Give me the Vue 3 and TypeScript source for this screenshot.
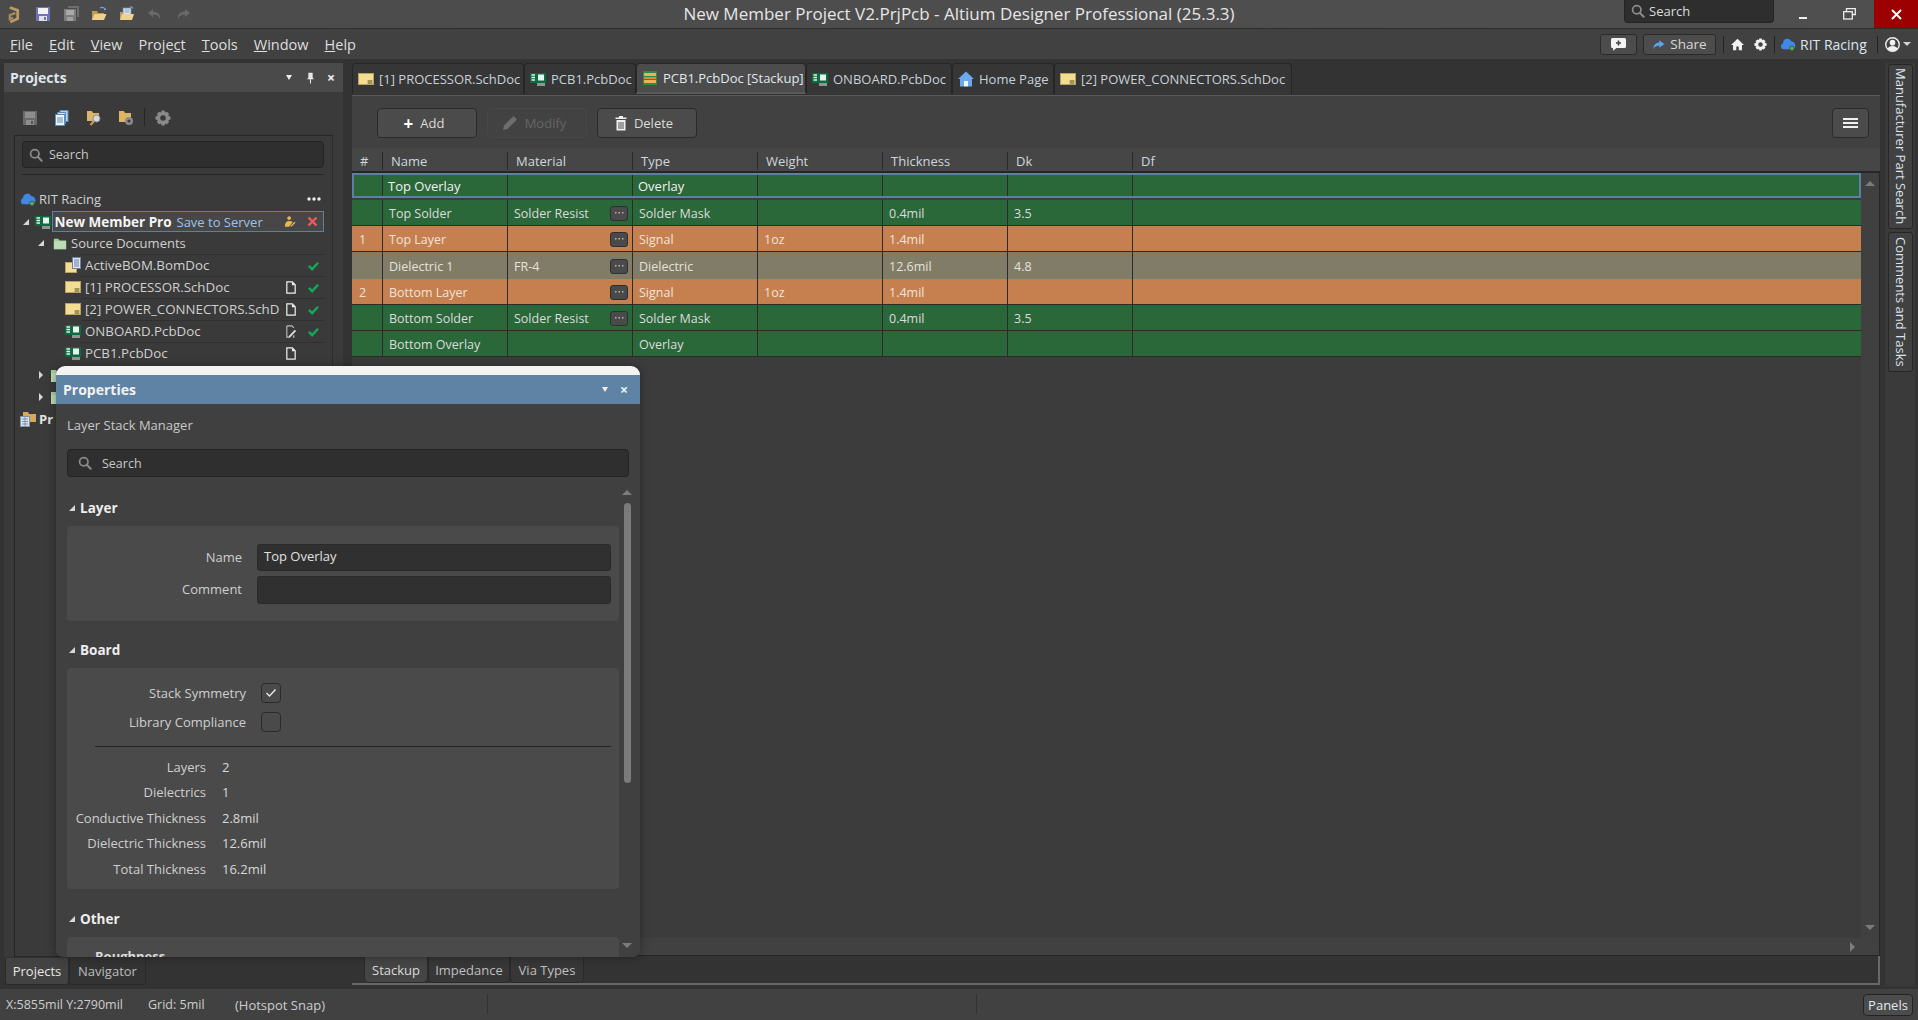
<script setup lang="ts">
const quickIcons = ["i-save", "i-saveall", "i-open", "i-openprj", "i-undo", "i-redo"];

const menus = [
  { before: "", key: "F", after: "ile" },
  { before: "", key: "E", after: "dit" },
  { before: "", key: "V", after: "iew" },
  { before: "Proje", key: "c", after: "t" },
  { before: "", key: "T", after: "ools" },
  { before: "", key: "W", after: "indow" },
  { before: "", key: "H", after: "elp" },
];

const docTabs = [
  { label: "[1] PROCESSOR.SchDoc", icon: "i-sch", width: 172 },
  { label: "PCB1.PcbDoc", icon: "i-pcb", width: 112 },
  { label: "PCB1.PcbDoc [Stackup]", icon: "i-stack", width: 170, active: true },
  { label: "ONBOARD.PcbDoc", icon: "i-pcb", width: 146 },
  { label: "Home Page", icon: "i-home-blue", width: 102 },
  { label: "[2] POWER_CONNECTORS.SchDoc", icon: "i-sch", width: 238 },
];

const treeDocs = [
  { label: "ActiveBOM.BomDoc", icon: "i-bom", state: "", ok: true },
  { label: "[1] PROCESSOR.SchDoc", icon: "i-sch", state: "i-page", ok: true },
  { label: "[2] POWER_CONNECTORS.SchD", icon: "i-sch", state: "i-page", ok: true },
  { label: "ONBOARD.PcbDoc", icon: "i-pcb", state: "i-page-edit", ok: true },
  { label: "PCB1.PcbDoc", icon: "i-pcb", state: "i-page", ok: false },
];

const columns = ["#", "Name", "Material", "Type", "Weight", "Thickness", "Dk", "Df"];

const layers = [
  { no: "", name: "Top Overlay", material: "", more: false, type: "Overlay", weight: "", thick: "", dk: "", kind: "green selected" },
  { no: "", name: "Top Solder", material: "Solder Resist", more: true, type: "Solder Mask", weight: "", thick: "0.4mil", dk: "3.5", kind: "green" },
  { no: "1", name: "Top Layer", material: "", more: true, type: "Signal", weight: "1oz", thick: "1.4mil", dk: "", kind: "copper" },
  { no: "", name: "Dielectric 1", material: "FR-4", more: true, type: "Dielectric", weight: "", thick: "12.6mil", dk: "4.8", kind: "core" },
  { no: "2", name: "Bottom Layer", material: "", more: true, type: "Signal", weight: "1oz", thick: "1.4mil", dk: "", kind: "copper" },
  { no: "", name: "Bottom Solder", material: "Solder Resist", more: true, type: "Solder Mask", weight: "", thick: "0.4mil", dk: "3.5", kind: "green" },
  { no: "", name: "Bottom Overlay", material: "", more: false, type: "Overlay", weight: "", thick: "", dk: "", kind: "green" },
];

const boardStats = [
  ["Layers", "2"],
  ["Dielectrics", "1"],
  ["Conductive Thickness", "2.8mil"],
  ["Dielectric Thickness", "12.6mil"],
  ["Total Thickness", "16.2mil"],
];
</script>

<template>
  <div class="app">
    <svg class="defs" width="0" height="0" aria-hidden="true">
      <symbol id="i-logo" viewBox="0 0 14 20">
        <path d="M3 2.5 L11.5 5.5 V14.5 L3.5 18" fill="none" stroke="#b89a62" stroke-width="3" />
        <path d="M9 8.5 L3 10.5 V15 L6.5 13.5" fill="none" stroke="#a98d58" stroke-width="2.4" />
      </symbol>
      <symbol id="i-save" viewBox="0 0 16 16">
        <path d="M1 1 H15 V15 H1 Z" fill="#6f73b8" />
        <rect x="3" y="2" width="10" height="6" fill="#f2f2f6" />
        <rect x="4" y="10" width="8" height="5" fill="#dfe0ee" />
        <rect x="9" y="11" width="2" height="3" fill="#6f73b8" />
      </symbol>
      <symbol id="i-saveall" viewBox="0 0 16 16">
        <path d="M5 0 H16 V11 H14 V2 H5 Z" fill="#6e6e6e" />
        <path d="M1 3 H13 V15 H1 Z" fill="#7c7c7c" />
        <rect x="3" y="4" width="8" height="5" fill="#a9a9a9" />
        <rect x="4" y="11" width="6" height="4" fill="#a0a0a0" />
      </symbol>
      <symbol id="i-save-gray" viewBox="0 0 16 16">
        <path d="M1 1 H15 V15 H1 Z" fill="#6a6a6a" />
        <rect x="3" y="2" width="10" height="6" fill="#8d8d8d" />
        <rect x="4" y="10" width="8" height="5" fill="#8d8d8d" />
        <rect x="9" y="11" width="2" height="3" fill="#555" />
      </symbol>
      <symbol id="i-open" viewBox="0 0 16 16">
        <path d="M1 5 H6 L7 7 H13 V14 H1 Z" fill="#c39a52" />
        <path d="M1 14 L3.5 8 H15.5 L13 14 Z" fill="#f0d18c" />
        <path d="M9 2 Q12 0.5 14 3" fill="none" stroke="#6fa5d8" stroke-width="1.2" />
        <path d="M13 4.5 L15.5 3.5 L13.6 1.5 Z" fill="#6fa5d8" />
      </symbol>
      <symbol id="i-openprj" viewBox="0 0 16 16">
        <path d="M1 6 H6 V14 H1 Z" fill="#c39a52" />
        <rect x="4" y="2" width="8" height="8" fill="#dbe6f2" stroke="#6f8eb0" stroke-width="0.8" />
        <path d="M5.5 4 H10.5 M5.5 6 H10.5" stroke="#6f8eb0" stroke-width="0.8" />
        <path d="M1 14 L3 8 H15 L13 14 Z" fill="#f0d18c" />
        <path d="M11 1 Q13 0.5 14 2.5" fill="none" stroke="#6fa5d8" stroke-width="1.2" />
      </symbol>
      <symbol id="i-undo" viewBox="0 0 16 16">
        <path d="M6 3 L1 7 L6 11 V8.5 Q11 8 13 13 Q14 6 6 5.5 Z" fill="#6a6a6a" />
      </symbol>
      <symbol id="i-redo" viewBox="0 0 16 16">
        <path d="M10 3 L15 7 L10 11 V8.5 Q5 8 3 13 Q2 6 10 5.5 Z" fill="#6a6a6a" />
      </symbol>
      <symbol id="i-search" viewBox="0 0 16 16">
        <circle cx="6.6" cy="6.6" r="4.8" fill="none" stroke="currentColor" stroke-width="2" />
        <path d="M10 10 L14.5 14.5" stroke="currentColor" stroke-width="2.4" stroke-linecap="round" />
      </symbol>
      <symbol id="i-sch" viewBox="0 0 16 16">
        <rect x="0.5" y="2.5" width="15" height="11" fill="#f3dd92" stroke="#b9a25e" />
        <rect x="9" y="9" width="6" height="4" fill="#d8c278" />
        <path d="M10 10 H14 M10 12 H14" stroke="#6b6240" />
      </symbol>
      <symbol id="i-bom" viewBox="0 0 16 16">
        <rect x="0.5" y="5.5" width="11" height="10" fill="#f3dd92" stroke="#b9a25e" />
        <rect x="7.5" y="0.5" width="8" height="11" fill="#dfe6f2" stroke="#6f7fa8" />
        <path d="M9 3 H14 M9 5 H14 M9 7 H14 M9 9 H14" stroke="#6f7fa8" />
      </symbol>
      <symbol id="i-pcb" viewBox="0 0 16 16">
        <rect x="0" y="2" width="16" height="10" fill="#0d6b42" />
        <path d="M1.5 4 H5 M1.5 6.5 H5 M1.5 9 H5" stroke="#e8f3ee" stroke-width="1.3" />
        <rect x="8" y="3.5" width="6" height="6" fill="#e8f3ee" />
        <path d="M8 12 V15 M10 12 V15 M12 12 V15 M14 12 V15" stroke="#e8f3ee" />
      </symbol>
      <symbol id="i-stack" viewBox="0 0 16 16">
        <rect x="1" y="1" width="14" height="14" fill="#2e8a4c" />
        <rect x="2" y="3" width="12" height="3" fill="#eeb15a" />
        <rect x="2" y="7" width="12" height="2" fill="#d98a3c" />
        <rect x="2" y="10" width="12" height="3" fill="#eeb15a" />
      </symbol>
      <symbol id="i-home-blue" viewBox="0 0 16 16">
        <path d="M8 0.5 L16 8 H14 V15.5 H10 V10 H6 V15.5 H2 V8 H0 Z" fill="#6aa9ee" />
        <path d="M6 10 H10 V15.5 H6 Z" fill="#f4f7fb" />
      </symbol>
      <symbol id="i-home" viewBox="0 0 16 16">
        <path d="M8 1 L16 8.5 H13.5 V15 H9.5 V10.5 H6.5 V15 H2.5 V8.5 H0 Z" fill="#f2f2f2" />
      </symbol>
      <symbol id="i-gear" viewBox="0 0 16 16">
        <path fill-rule="evenodd" d="M6.5 0.5 H9.5 L10 2.6 L11.9 1.7 L14.1 3.9 L13.2 5.8 L15.5 6.5 V9.5 L13.2 10.2 L14.1 12.1 L11.9 14.3 L10 13.4 L9.5 15.5 H6.5 L6 13.4 L4.1 14.3 L1.9 12.1 L2.8 10.2 L0.5 9.5 V6.5 L2.8 5.8 L1.9 3.9 L4.1 1.7 L6 2.6 Z M8 5.2 A2.8 2.8 0 1 0 8 10.8 A2.8 2.8 0 1 0 8 5.2 Z" fill="currentColor" />
      </symbol>
      <symbol id="i-cloud" viewBox="0 0 18 16">
        <path d="M4 14 A3.6 3.6 0 0 1 3.4 7 A5 5 0 0 1 8 2 Q11 1.5 13 5 A4.6 4.6 0 0 1 14 14 Z" fill="#3f88e6" />
        <circle cx="13.5" cy="13" r="2.6" fill="#54b44e" stroke="#3c3c3c" stroke-width="0.8" />
      </symbol>
      <symbol id="i-page" viewBox="0 0 12 14">
        <path d="M1.5 1 H7.5 L10.5 4 V13 H1.5 Z" fill="#3c3c3c" stroke="#f0f0f0" stroke-width="1.3" />
        <path d="M7 1 V4.5 H10.5 Z" fill="#f0f0f0" />
      </symbol>
      <symbol id="i-page-edit" viewBox="0 0 12 14">
        <path d="M1.5 1 H7 L9 3 M1.5 1 V13 H5 M9 11 V13 H8" fill="none" stroke="#bdbdbd" stroke-width="1.2" />
        <path d="M4 11.5 L10 5 L11.5 6.5 L5.5 13 L3.5 13.5 Z" fill="#dcdcdc" />
      </symbol>
      <symbol id="i-check" viewBox="0 0 12 12">
        <path d="M1 6.5 L4.5 10 L11 3" fill="none" stroke="#14a85a" stroke-width="2.6" />
      </symbol>
      <symbol id="i-user-edit" viewBox="0 0 14 14">
        <circle cx="6" cy="3" r="2.2" fill="#e6b94f" />
        <path d="M1 13 Q1 6.5 6 6.5 Q9 6.5 10 8 L6 13 Z" fill="#e6b94f" />
        <path d="M7 12.5 L12 7 L13.5 8.5 L8.5 13.5 Z" fill="#e6b94f" stroke="#444" stroke-width="0.5" />
      </symbol>
      <symbol id="i-folder" viewBox="0 0 16 16">
        <path d="M1 3 H6 L7.5 5 H15 V15 H1 Z" fill="#a5cf9f" />
        <path d="M1 6 H15 V15 H1 Z" fill="#bcdcb4" />
      </symbol>
      <symbol id="i-prjgroup" viewBox="0 0 16 16">
        <path d="M3 1 H8 L9 3 H16 V11 H3 Z" fill="#d8a95c" />
        <rect x="0.5" y="5.5" width="9" height="10" fill="#dbe3ec" stroke="#7f93aa" />
        <path d="M2 8 H8 M2 10.5 H8 M2 13 H8 M5 6 V15" stroke="#7f93aa" />
      </symbol>
      <symbol id="i-docs" viewBox="0 0 16 16">
        <rect x="6" y="0.5" width="8" height="11" fill="#bcd3ea" stroke="#5d8dbd" />
        <rect x="3.5" y="2.5" width="8" height="11" fill="#cfdef0" stroke="#5d8dbd" />
        <rect x="1.5" y="4.5" width="9" height="11" fill="#eef4fb" stroke="#5d8dbd" />
        <path d="M3 8 H9 M3 10 H9 M3 12 H9" stroke="#5d8dbd" />
      </symbol>
      <symbol id="i-folder-find" viewBox="0 0 16 16">
        <path d="M1 1 H6 L7 3 H13 V11 H1 Z" fill="#dcb566" />
        <circle cx="10.5" cy="8.5" r="3.5" fill="#cfdce6" stroke="#8c8c8c" />
        <path d="M8 11 L4.5 15" stroke="#c89f52" stroke-width="2" />
      </symbol>
      <symbol id="i-folder-gear" viewBox="0 0 16 16">
        <path d="M1 1 H6 L7 3 H13 V12 H1 Z" fill="#dcb566" />
        <circle cx="11" cy="11" r="4" fill="#8b8b8b" />
        <circle cx="11" cy="11" r="1.6" fill="#3c3c3c" />
      </symbol>
      <symbol id="i-feedback" viewBox="0 0 16 14">
        <path d="M2 1 H14 Q15.5 1 15.5 2.5 V9.5 Q15.5 11 14 11 H6 L2.5 13.8 V11 H2 Q0.5 11 0.5 9.5 V2.5 Q0.5 1 2 1 Z" fill="#f2f2f2" />
        <path d="M8 3.5 V8.5 M5.5 6 H10.5" stroke="#444" stroke-width="1.6" />
      </symbol>
      <symbol id="i-share" viewBox="0 0 16 14">
        <path d="M9 1.5 L15.5 6.5 L9 11 V8.3 Q4 8.3 1 13 Q2 5 9 4.6 Z" fill="#5ba4ea" />
      </symbol>
      <symbol id="i-user" viewBox="0 0 16 16">
        <circle cx="8" cy="8" r="7.2" fill="none" stroke="#f0f0f0" stroke-width="1.5" />
        <circle cx="8" cy="6" r="3" fill="#f0f0f0" />
        <path d="M2.8 12.6 Q4 9.6 8 9.6 Q12 9.6 13.2 12.6 Q11 15 8 15 Q5 15 2.8 12.6 Z" fill="#f0f0f0" />
      </symbol>
      <symbol id="i-pin" viewBox="0 0 10 14">
        <path d="M2.5 1 H7.5 V6.5 L9 8.5 H5.6 V13.5 H4.4 V8.5 H1 L2.5 6.5 Z" fill="#e8e8e8" />
      </symbol>
      <symbol id="i-pencil" viewBox="0 0 16 16">
        <path d="M1 15 L2 10.5 L11.5 1 L15 4.5 L5.5 14 Z" fill="#6d6d6d" />
      </symbol>
      <symbol id="i-trash" viewBox="0 0 12 16">
        <path d="M4 1 H8 V2.5 H11.5 V4 H0.5 V2.5 H4 Z" fill="#f0f0f0" />
        <path d="M1.5 5 H10.5 V15.5 H1.5 Z" fill="#f0f0f0" />
        <path d="M4 7 V14 M6 7 V14 M8 7 V14" stroke="#4a4a4a" />
      </symbol>
      <symbol id="i-dots" viewBox="0 0 14 4">
        <circle cx="2" cy="2" r="1.7" fill="#eeeeee" />
        <circle cx="7" cy="2" r="1.7" fill="#eeeeee" />
        <circle cx="12" cy="2" r="1.7" fill="#eeeeee" />
      </symbol>
    </svg>

    <header class="titlebar">
      <div class="quick">
        <svg class="logo"><use href="#i-logo" /></svg>
        <svg v-for="icon in quickIcons" :key="icon" class="quick-icon"><use :href="`#${icon}`" /></svg>
      </div>
      <div class="title">New Member Project V2.PrjPcb - Altium Designer Professional (25.3.3)</div>
      <div class="title-right">
        <div class="global-search">
          <svg class="search-ico"><use href="#i-search" /></svg>
          <span>Search</span>
        </div>
        <div class="win-btn"><span class="win-min"></span></div>
        <div class="win-btn restore">
          <svg width="13" height="12" viewBox="0 0 13 12">
            <path d="M3.5 3 V0.7 H12.3 V6.5 H9.5" fill="none" stroke="#eee" stroke-width="1.3" />
            <rect x="0.7" y="3.7" width="8.6" height="7.3" fill="none" stroke="#eee" stroke-width="1.3" />
          </svg>
        </div>
        <div class="win-btn close">
          <svg width="11" height="11" viewBox="0 0 11 11">
            <path d="M1 1 L10 10 M10 1 L1 10" stroke="#fff" stroke-width="1.8" />
          </svg>
        </div>
      </div>
    </header>

    <nav class="menubar">
      <div class="menus">
        <span v-for="menu in menus" :key="menu.key" class="menu">{{ menu.before }}<u>{{ menu.key }}</u>{{ menu.after }}</span>
      </div>
      <div class="menu-right">
        <button class="top-btn feedback" type="button"><svg width="17" height="14"><use href="#i-feedback" /></svg></button>
        <button class="top-btn share" type="button"><svg width="13" height="11"><use href="#i-share" /></svg>Share</button>
        <i class="vsep s1"></i>
        <svg class="home-ico"><use href="#i-home" /></svg>
        <svg class="gear-ico"><use href="#i-gear" /></svg>
        <i class="vsep s2"></i>
        <svg class="cloud-ico"><use href="#i-cloud" /></svg>
        <span class="workspace">RIT Racing</span>
        <i class="vsep s3"></i>
        <svg class="user-ico"><use href="#i-user" /></svg>
        <span class="caret"></span>
      </div>
    </nav>

    <main class="workspace-area">
      <aside class="left-col">
        <section class="projects">
          <div class="panel-head">
            <strong>Projects</strong>
            <span class="tri-down"></span>
            <svg class="pin"><use href="#i-pin" /></svg>
            <span class="panel-x">×</span>
          </div>
          <div class="panel-body">
            <div class="panel-tools">
              <svg class="tool"><use href="#i-save-gray" /></svg>
              <svg class="tool"><use href="#i-docs" /></svg>
              <svg class="tool"><use href="#i-folder-find" /></svg>
              <svg class="tool"><use href="#i-folder-gear" /></svg>
              <i class="tool-sep"></i>
              <svg class="tool gear"><use href="#i-gear" /></svg>
            </div>
            <div class="tree-box">
              <div class="search-field">
                <svg class="search-ico"><use href="#i-search" /></svg>
                <span>Search</span>
              </div>
              <div class="tree-rule"></div>
              <div class="tree-row org">
                <svg class="tree-ico"><use href="#i-cloud" /></svg>
                <span>RIT Racing</span>
                <svg class="dots"><use href="#i-dots" /></svg>
              </div>
              <div class="tree-row project">
                <span class="arrow open"></span>
                <svg class="tree-ico"><use href="#i-pcb" /></svg>
                <div class="project-sel">
                  <strong>New Member Pro</strong>
                  <span class="save-link">Save to Server</span>
                  <svg class="state"><use href="#i-user-edit" /></svg>
                  <svg class="state mark" width="11" height="11" viewBox="0 0 11 11">
                    <path d="M1.5 1.5 L9.5 9.5 M9.5 1.5 L1.5 9.5" stroke="#f05a5a" stroke-width="2.4" />
                  </svg>
                </div>
              </div>
              <div class="tree-row source">
                <span class="arrow open"></span>
                <svg class="tree-ico"><use href="#i-folder" /></svg>
                <span>Source Documents</span>
              </div>
              <div v-for="doc in treeDocs" :key="doc.label" class="tree-row doc">
                <svg class="tree-ico"><use :href="`#${doc.icon}`" /></svg>
                <span class="doc-name">{{ doc.label }}</span>
                <svg v-if="doc.state" class="state page"><use :href="`#${doc.state}`" /></svg>
                <svg v-if="doc.ok" class="state ok"><use href="#i-check" /></svg>
              </div>
              <div class="tree-row collapsed"><span class="arrow"></span><svg class="tree-ico"><use href="#i-folder" /></svg></div>
              <div class="tree-row collapsed"><span class="arrow"></span><svg class="tree-ico"><use href="#i-folder" /></svg></div>
              <div class="tree-row group">
                <svg class="tree-ico"><use href="#i-prjgroup" /></svg>
                <strong>Pr</strong>
              </div>
            </div>
          </div>
        </section>
        <div class="panel-tabs">
          <span class="panel-tab active">Projects</span>
          <span class="panel-tab">Navigator</span>
        </div>
      </aside>

      <section class="editor">
        <div class="doc-tabs">
          <div
            v-for="tab in docTabs"
            :key="tab.label"
            class="doc-tab"
            :class="{ active: tab.active }"
            :style="{ width: `${tab.width}px` }"
          >
            <svg class="tab-ico"><use :href="`#${tab.icon}`" /></svg>
            <span>{{ tab.label }}</span>
          </div>
        </div>
        <div class="doc-body">
          <div class="toolbar">
            <button class="tool-btn" type="button"><span class="plus">+</span>Add</button>
            <button class="tool-btn disabled" type="button"><svg width="16" height="16"><use href="#i-pencil" /></svg>Modify</button>
            <button class="tool-btn" type="button"><svg width="12" height="16"><use href="#i-trash" /></svg>Delete</button>
            <button class="tool-btn burger" type="button"><span></span><span></span><span></span></button>
          </div>
          <div class="table-head">
            <div v-for="col in columns" :key="col" class="head-cell">{{ col }}</div>
          </div>
          <div class="table-wrap">
            <div class="table-main">
              <div class="rows">
                <div v-for="layer in layers" :key="layer.name" class="layer-row" :class="layer.kind">
                  <div class="cell no">{{ layer.no }}</div>
                  <div class="cell">{{ layer.name }}</div>
                  <div class="cell material">
                    <span>{{ layer.material }}</span>
                    <button v-if="layer.more" class="more" type="button">
                      <svg width="9" height="2" viewBox="0 0 9 2"><path d="M0 0 H1.5 V1.5 H0 Z M3.5 0 H5 V1.5 H3.5 Z M7 0 H8.5 V1.5 H7 Z" fill="#b4b4b4" /></svg>
                    </button>
                  </div>
                  <div class="cell">{{ layer.type }}</div>
                  <div class="cell">{{ layer.weight }}</div>
                  <div class="cell">{{ layer.thick }}</div>
                  <div class="cell">{{ layer.dk }}</div>
                  <div class="cell last"></div>
                </div>
              </div>
              <div class="v-scroll">
                <span class="tri-up"></span>
                <span class="tri-dn"></span>
              </div>
            </div>
            <div class="h-scroll">
              <span class="tri-right"></span>
            </div>
          </div>
          <div class="view-tabs">
            <span class="view-tab active">Stackup</span>
            <span class="view-tab">Impedance</span>
            <span class="view-tab">Via Types</span>
          </div>
        </div>
      </section>

      <aside class="side-strip">
        <div class="side-tab first">Manufacturer Part Search</div>
        <div class="side-tab">Comments and Tasks</div>
      </aside>
    </main>

    <footer class="statusbar">
      <span class="coords">X:5855mil Y:2790mil</span>
      <span class="grid-size">Grid: 5mil</span>
      <span class="snap">(Hotspot Snap)</span>
      <i class="status-sep a"></i>
      <i class="status-sep b"></i>
      <button class="panels-btn" type="button">Panels</button>
    </footer>

    <section class="properties">
      <div class="prop-strip"></div>
      <div class="prop-title">
        <strong>Properties</strong>
        <span class="tri-down"></span>
        <span class="panel-x">×</span>
      </div>
      <div class="prop-body">
        <div class="prop-sub">Layer Stack Manager</div>
        <div class="search-field prop-search">
          <svg class="search-ico"><use href="#i-search" /></svg>
          <span>Search</span>
        </div>
        <div class="prop-scroll">
          <div class="prop-content">
            <h3 class="section-head"><span class="arrow open"></span>Layer</h3>
            <div class="card layer-card">
              <div class="form-row">
                <label>Name</label>
                <div class="input">Top Overlay</div>
              </div>
              <div class="form-row">
                <label>Comment</label>
                <div class="input tall"></div>
              </div>
            </div>

            <h3 class="section-head"><span class="arrow open"></span>Board</h3>
            <div class="card board-card">
              <div class="check-row">
                <label>Stack Symmetry</label>
                <span class="checkbox">
                  <svg width="12" height="10" viewBox="0 0 12 10"><path d="M1.5 5 L4.5 8 L10.5 1.5" fill="none" stroke="#e8e8e8" stroke-width="1.4" /></svg>
                </span>
              </div>
              <div class="check-row">
                <label>Library Compliance</label>
                <span class="checkbox"></span>
              </div>
              <div class="board-rule"></div>
              <div v-for="stat in boardStats" :key="stat[0]" class="stat-row">
                <label>{{ stat[0] }}</label>
                <span>{{ stat[1] }}</span>
              </div>
            </div>

            <h3 class="section-head other"><span class="arrow open"></span>Other</h3>
            <div class="card other-card">
              <strong>Roughness</strong>
            </div>
          </div>
          <div class="prop-bar">
            <span class="tri-up"></span>
            <span class="thumb"></span>
            <span class="tri-dn"></span>
          </div>
        </div>
      </div>
    </section>
  </div>
</template>

<style scoped>
.app {
  --ui: "Open Sans", "Noto Sans", "Liberation Sans", sans-serif;
  position: relative;
  display: flex;
  flex-direction: column;
  width: 1918px;
  height: 1020px;
  overflow: hidden;
  background: #333333;
  color: #d6d6d6;
  font-family: var(--ui);
  font-size: 13px;
}

.defs {
  position: absolute;
}

button {
  font: inherit;
  color: inherit;
}

/* title bar */
.titlebar {
  flex: none;
  display: grid;
  grid-template-columns: 1fr auto 1fr;
  align-items: center;
  height: 29px;
  box-sizing: border-box;
  border-bottom: 1px solid #2e2e2e;
  background: linear-gradient(90deg, #4b4b4b, #4f4f4f);
}

.quick {
  display: flex;
  align-items: center;
  padding-left: 7px;
}

.logo {
  width: 13px;
  height: 19px;
  margin-right: 15px;
}

.quick-icon {
  width: 16px;
  height: 16px;
  margin-right: 12px;
}

.title {
  padding-bottom: 2px;
  color: #e6e6e6;
  font-size: 17px;
}

.title-right {
  display: flex;
  align-items: flex-start;
  justify-content: flex-end;
  height: 28px;
}

.global-search {
  display: flex;
  align-items: center;
  gap: 4px;
  width: 150px;
  height: 23px;
  margin-right: 7px;
  padding-left: 6px;
  box-sizing: border-box;
  border: 1px solid #242424;
  border-top: 0;
  border-radius: 0 0 4px 4px;
  background: #2e2e2e;
  color: #dcdcdc;
}

.search-ico {
  flex: none;
  width: 14px;
  height: 14px;
  color: #8a8a8a;
}

.win-btn {
  display: flex;
  align-items: center;
  justify-content: center;
  width: 44px;
  height: 28px;
}

.win-btn.restore {
  width: 49px;
}

.win-btn.close {
  background: #9c0000;
}

.win-min {
  width: 8px;
  height: 2px;
  margin-top: 8px;
  background: #f0f0f0;
}

/* menu bar */
.menubar {
  flex: none;
  display: flex;
  align-items: center;
  justify-content: space-between;
  height: 30px;
  background: #414141;
}

.menus {
  display: flex;
  padding-left: 10px;
  color: #dedede;
  font-size: 14.5px;
}

.menu {
  margin-right: 16px;
}

.menu-right {
  display: flex;
  align-items: center;
  padding-right: 7px;
}

.top-btn {
  display: flex;
  align-items: center;
  justify-content: center;
  height: 21px;
  box-sizing: border-box;
  border: 1px solid #2a2a2a;
  border-radius: 3px;
  background: #4c4c4c;
}

.feedback {
  width: 37px;
}

.share {
  gap: 5px;
  width: 73px;
  margin-left: 6px;
  color: #d8d8d8;
  font-size: 13.5px;
}

.vsep {
  flex: none;
  width: 1px;
  height: 17px;
  background: #232323;
}

.vsep.s1 {
  margin-left: 7px;
}

.vsep.s2 {
  margin-left: 7.5px;
}

.vsep.s3 {
  margin-left: 8px;
}

.home-ico {
  width: 13px;
  height: 13px;
  margin-left: 6.5px;
}

.gear-ico {
  width: 13px;
  height: 13px;
  margin-left: 10px;
  color: #f0f0f0;
}

.cloud-ico {
  width: 16px;
  height: 14px;
  margin-left: 5px;
}

.workspace {
  width: 69px;
  margin-left: 4px;
  color: #dbe6f0;
  font-size: 14px;
  white-space: nowrap;
}

.user-ico {
  width: 15px;
  height: 15px;
  margin-left: 6.5px;
}

.caret {
  width: 0;
  height: 0;
  margin-left: 3.5px;
  border-top: 4px solid #d0d0d0;
  border-right: 4px solid transparent;
  border-left: 4px solid transparent;
}

/* main area */
.workspace-area {
  flex: 1;
  display: flex;
  min-height: 0;
  padding: 4px 0 0 4px;
}

.left-col {
  flex: none;
  display: flex;
  flex-direction: column;
  width: 339px;
  margin-right: 9px;
}

.projects {
  display: flex;
  flex-direction: column;
  height: 894px;
  background: #3a3a3a;
}

.panel-head {
  flex: none;
  display: flex;
  align-items: center;
  height: 29px;
  padding: 0 8px 0 6px;
  background: #4a4a4a;
}

.panel-head strong {
  flex: 1;
  color: #dfe6ee;
  font-size: 14px;
}

.tri-down {
  width: 0;
  height: 0;
  border-top: 5px solid #eee;
  border-right: 3px solid transparent;
  border-left: 3px solid transparent;
}

.pin {
  width: 9px;
  height: 12px;
  margin-left: 14px;
}

.panel-x {
  margin-left: 12px;
  color: #f0f0f0;
  font-size: 14px;
  font-weight: 700;
  line-height: 1;
}

.panel-body {
  flex: 1;
  display: flex;
  flex-direction: column;
  min-height: 0;
}

.panel-tools {
  flex: none;
  display: flex;
  align-items: flex-end;
  height: 43px;
  padding: 0 0 9px 18px;
  box-sizing: border-box;
}

.tool {
  width: 16px;
  height: 16px;
  margin-right: 16px;
}

.tool.gear {
  color: #8a8a8a;
  margin-left: 10px;
}

.tool-sep {
  width: 1px;
  height: 18px;
  margin-left: -6px;
  background: #262626;
}

.tree-box {
  flex: 1;
  width: 319px;
  margin-left: 10px;
  box-sizing: border-box;
  padding-top: 5px;
  border: 1px solid #262626;
  border-right-color: #2c2c2c;
  overflow: hidden;
}

.search-field {
  display: flex;
  align-items: center;
  gap: 6px;
  height: 27px;
  margin: 0 8px 0 7px;
  padding-left: 6px;
  box-sizing: border-box;
  border: 1px solid #232323;
  border-radius: 4px;
  background: #2f2f2f;
  color: #c8c8c8;
  font-size: 12.5px;
}

.tree-rule {
  height: 1px;
  margin: 6px 8px 13px 7px;
  background: #262626;
}

.tree-row {
  position: relative;
  display: flex;
  align-items: center;
  height: 22px;
  color: #d0d0d0;
}

.tree-ico {
  flex: none;
  width: 16px;
  height: 16px;
}

.org {
  padding-left: 5px;
  gap: 3px;
}

.dots {
  width: 14px;
  height: 4px;
  margin-left: auto;
  margin-right: 11px;
}

.arrow {
  flex: none;
  width: 0;
  height: 0;
  border-top: 4px solid transparent;
  border-bottom: 4px solid transparent;
  border-left: 4px solid #d8d8d8;
}

.arrow.open {
  width: 0;
  height: 0;
  border-top: 0;
  border-right: 0;
  border-left: 6px solid transparent;
  border-bottom: 6px solid #d8d8d8;
}

.project {
  height: 21px;
  margin-top: 1px;
  padding-left: 8px;
}

.project .tree-ico {
  margin-left: 6px;
  margin-right: 1px;
}

.project-sel {
  flex: none;
  display: flex;
  align-items: center;
  width: 272px;
  height: 21px;
  box-sizing: border-box;
  padding-left: 1.5px;
  border: 1px solid #5f7f9f;
  background: #474747;
}

.project-sel strong {
  flex: none;
  width: 118px;
  margin-right: 4px;
  overflow: hidden;
  color: #f4f4f4;
  font-size: 13.5px;
  white-space: nowrap;
}

.save-link {
  flex: none;
  width: 107px;
  color: #9cc3ea;
  white-space: nowrap;
}

.state {
  flex: none;
  width: 12px;
  height: 13px;
}

.state.mark {
  margin-left: 11px;
  width: 11px;
  height: 11px;
}

.source {
  padding-left: 23px;
  gap: 4px;
}

.source .tree-ico {
  width: 14px;
  margin-left: 5px;
}

.doc {
  padding-left: 50px;
  padding-right: 6px;
  gap: 4px;
  box-sizing: border-box;
}

.doc::before {
  content: "";
  position: absolute;
  top: 0;
  right: 7px;
  left: 66px;
  height: 1px;
  background: #303030;
}

.doc-name {
  flex: 1;
  overflow: hidden;
  font-size: 13.3px;
  white-space: nowrap;
  padding-right: 44px;
}

.state.page {
  position: absolute;
  left: 270px;
}

.state.ok {
  position: absolute;
  left: 293px;
  width: 11px;
  height: 11px;
}

.collapsed {
  padding-left: 24px;
  gap: 4px;
}

.collapsed .tree-ico {
  margin-left: 3px;
}

.group {
  padding-left: 5px;
  gap: 3px;
  color: #e0e0e0;
}

.panel-tabs {
  flex: none;
  display: flex;
  height: 27px;
  margin: 1px 0 0 1px;
}

.panel-tab {
  display: flex;
  align-items: center;
  justify-content: center;
  width: 77px;
  box-sizing: border-box;
  border: 1px solid #2a2a2a;
  border-top: 0;
  border-radius: 0 0 3px 3px;
  background: #333333;
  color: #bcbcbc;
}

.panel-tab.active {
  width: 64px;
  background: #424242;
  color: #e6e6e6;
}

/* editor */
.editor {
  flex: none;
  display: flex;
  flex-direction: column;
  width: 1528px;
  margin: 0 5px 4px 0;
}

.doc-tabs {
  flex: none;
  display: flex;
  height: 28px;
  margin-bottom: 1px;
}

.doc-tab {
  display: flex;
  align-items: center;
  gap: 5px;
  height: 31px;
  padding-left: 5px;
  box-sizing: border-box;
  border: 1px solid #262626;
  border-bottom: 0;
  border-radius: 4px 4px 0 0;
  background: #363636;
  color: #c8d0d8;
  white-space: nowrap;
}

.doc-tab.active {
  background: #4c4c4c;
  color: #e0e8f0;
  border-bottom: 2px solid #5b5b5b;
}

.tab-ico {
  flex: none;
  width: 16px;
  height: 16px;
}

.doc-body {
  flex: 1;
  display: flex;
  flex-direction: column;
  min-height: 0;
  margin-top: 3px;
  border-top: 1px solid #5a5a5a;
  background: #3c3c3c;
}

.toolbar {
  flex: none;
  display: flex;
  align-items: center;
  gap: 10px;
  height: 52px;
  padding: 2px 11px 0 25px;
  box-sizing: border-box;
  background: #414141;
}

.tool-btn {
  display: flex;
  align-items: center;
  justify-content: center;
  gap: 7px;
  width: 100px;
  height: 30px;
  padding: 0 6px 0 0;
  box-sizing: border-box;
  border: 1px solid #2a2a2a;
  border-radius: 4px;
  background: #4b4b4b;
  color: #dcdcdc;
  font-size: 13px;
}

.plus {
  color: #fff;
  font-size: 17px;
  font-weight: 700;
  line-height: 1;
}

.tool-btn.disabled {
  border-color: #474747;
  background: #424242;
  color: #666666;
}

.burger {
  flex-direction: column;
  gap: 2px;
  width: 37px;
  margin-left: auto;
  padding: 0;
}

.burger span {
  width: 15px;
  height: 2px;
  background: #f0f0f0;
}

.table-head {
  flex: none;
  display: grid;
  grid-template-columns: 31px repeat(7, 125px) 1fr;
  height: 25px;
  border-bottom: 2px solid #262626;
  box-sizing: border-box;
  background: #464646;
  color: #cfd6dc;
}

.head-cell {
  display: flex;
  align-items: center;
  margin: 4px 0 1px;
  padding-left: 8px;
  border-right: 1px solid #2a2a2a;
}

.head-cell:last-child {
  border-right: 0;
}

.table-wrap {
  flex: 1;
  display: flex;
  flex-direction: column;
  min-height: 0;
  border-bottom: 1px solid #262626;
  border-right: 1px solid #262626;
}

.table-main {
  flex: 1;
  display: flex;
  min-height: 0;
}

.rows {
  flex: 1;
  padding-top: 0;
}

.layer-row {
  display: grid;
  grid-template-columns: 31px repeat(6, 125px) 1fr;
  height: 26px;
  box-sizing: border-box;
  border-bottom: 1px solid #2b2b2b;
  color: #dcdcdc;
  font-size: 12.5px;
}

.layer-row.green {
  background: #2a6739;
}

.layer-row.copper {
  background: #c67f4e;
  color: #f0e4da;
}

.layer-row.core {
  height: 27px;
  background: #817c67;
  border-bottom: 0;
  color: #e4e2da;
}

.layer-row.selected {
  grid-template-columns: 29px repeat(6, 125px) 1fr;
  height: 25px;
  margin-bottom: 2px;
  border: 2px solid #5c7fa3;
  color: #f2f2f2;
  font-size: 13px;
}

.cell {
  display: flex;
  align-items: center;
  justify-content: space-between;
  min-width: 0;
  padding: 1px 0 0 6px;
  box-sizing: border-box;
  border-right: 1px solid #2b2b2b;
  white-space: nowrap;
}

.layer-row.selected .cell {
  padding-top: 0;
  padding-left: 5px;
}

.cell.no {
  padding-left: 7px;
}

.cell.last {
  border-right: 0;
}

.material {
  padding-right: 4px;
}

.more {
  display: flex;
  align-items: center;
  justify-content: center;
  width: 18px;
  height: 15px;
  padding: 0;
  border: 1px solid #2f2f2f;
  border-radius: 3px;
  background: #4a4a4a;
}

.v-scroll {
  flex: none;
  display: flex;
  flex-direction: column;
  align-items: center;
  justify-content: space-between;
  width: 18px;
  padding: 8px 0 8px;
  box-sizing: border-box;
  background: #404040;
}

.tri-up {
  width: 0;
  height: 0;
  border-right: 5px solid transparent;
  border-bottom: 5px solid #7c7c7c;
  border-left: 5px solid transparent;
}

.tri-dn {
  width: 0;
  height: 0;
  border-top: 5px solid #7c7c7c;
  border-right: 5px solid transparent;
  border-left: 5px solid transparent;
}

.h-scroll {
  flex: none;
  display: flex;
  align-items: center;
  justify-content: flex-end;
  height: 17px;
  padding-right: 24px;
  background: #414141;
}

.tri-right {
  width: 0;
  height: 0;
  border-top: 5px solid transparent;
  border-bottom: 5px solid transparent;
  border-left: 5px solid #7c7c7c;
}

.view-tabs {
  flex: none;
  display: flex;
  height: 29px;
  padding-left: 12px;
  box-sizing: border-box;
  border-right: 2px solid #686868;
  border-bottom: 2px solid #686868;
  background: #333333;
}

.view-tab {
  display: flex;
  align-items: center;
  justify-content: center;
  width: 82px;
  height: 27px;
  padding-top: 1px;
  box-sizing: border-box;
  border: 1px solid #2a2a2a;
  border-top: 0;
  border-radius: 0 0 5px 5px;
  background: #373737;
  color: #bfbfbf;
}

.view-tab.active {
  width: 64px;
  background: #454545;
  color: #dadada;
}

.view-tab:last-child {
  width: 74px;
}

/* right strip */
.side-strip {
  flex: none;
  display: flex;
  flex-direction: column;
  gap: 3px;
  width: 30px;
  margin-bottom: 3px;
  padding: 1px 0 0 3px;
  box-sizing: border-box;
  background: #3a3a3a;
}

.side-tab {
  display: flex;
  align-items: center;
  justify-content: center;
  width: 25px;
  height: 140px;
  box-sizing: border-box;
  border: 1px solid #262626;
  border-radius: 3px;
  background: #414141;
  color: #dce4ea;
  font-size: 13px;
  writing-mode: vertical-rl;
  white-space: nowrap;
}

.side-tab.first {
  height: 165px;
}

/* status bar */
.statusbar {
  flex: none;
  position: relative;
  display: flex;
  align-items: center;
  height: 31px;
  padding-left: 6px;
  background: #414141;
  color: #cdcdcd;
  font-size: 12.5px;
}

.coords {
  width: 142px;
}

.grid-size {
  width: 87px;
}

.snap {
  font-size: 13px;
}

.status-sep {
  position: absolute;
  top: 5px;
  width: 1px;
  height: 20px;
  background: #333333;
}

.status-sep.a {
  left: 487px;
}

.status-sep.b {
  left: 976px;
}

.panels-btn {
  margin-left: auto;
  margin-right: 5px;
  width: 50px;
  height: 22px;
  padding: 0;
  border: 1px solid #232323;
  border-radius: 4px;
  background: #4c4c4c;
  color: #e0e8f0;
  font-size: 13px;
}

/* floating properties panel */
.properties {
  position: absolute;
  top: 366px;
  left: 56px;
  display: flex;
  flex-direction: column;
  width: 584px;
  height: 591px;
  overflow: hidden;
  border-radius: 9px 9px 7px 7px;
  background: #404040;
  box-shadow: 0 0 10px rgba(0, 0, 0, 0.35);
}

.prop-strip {
  flex: none;
  height: 9px;
  background: #f3f3f3;
}

.prop-title {
  flex: none;
  display: flex;
  align-items: center;
  height: 29px;
  padding: 0 12px 0 7px;
  background: #5f83a5;
}

.prop-title strong {
  flex: 1;
  color: #f2f2f2;
  font-size: 14px;
}

.prop-body {
  flex: 1;
  display: flex;
  flex-direction: column;
  min-height: 0;
  padding-left: 11px;
}

.prop-sub {
  flex: none;
  margin-top: 12px;
  height: 19px;
  line-height: 19px;
  color: #c8c8c8;
}

.prop-search {
  flex: none;
  gap: 10px;
  margin: 14px 11px 13px 0;
  padding-left: 10px;
  height: 28px;
}

.prop-scroll {
  flex: 1;
  display: flex;
  min-height: 0;
}

.prop-content {
  width: 552px;
  overflow: hidden;
}

.section-head {
  display: flex;
  align-items: center;
  gap: 5px;
  height: 36px;
  margin: 0;
  padding-left: 2px;
  color: #eeeeee;
  font-size: 13.5px;
  font-weight: 700;
}

.section-head.other {
  margin-top: 12px;
}

.card {
  box-sizing: border-box;
  border-radius: 4px;
  background: #4a4a4a;
}

.layer-card {
  height: 95px;
  margin-bottom: 11px;
  padding-top: 18px;
}

.form-row {
  display: flex;
  align-items: flex-start;
  margin-bottom: 5px;
}

.form-row label {
  flex: none;
  width: 175px;
  line-height: 27px;
  text-align: right;
  color: #cfcfcf;
}

.input {
  width: 354px;
  height: 27px;
  margin-left: 15px;
  padding-left: 6px;
  box-sizing: border-box;
  border: 1px solid #2a2a2a;
  border-radius: 3px;
  background: #303030;
  color: #e0e0e0;
  line-height: 23px;
}

.input.tall {
  height: 28px;
}

.board-card {
  height: 221px;
  padding-top: 15px;
}

.check-row {
  display: flex;
  align-items: center;
  height: 20px;
  margin-bottom: 9px;
}

.check-row label {
  width: 179px;
  text-align: right;
  color: #cfcfcf;
}

.checkbox {
  display: flex;
  align-items: center;
  justify-content: center;
  width: 20px;
  height: 20px;
  margin-left: 15px;
  box-sizing: border-box;
  border: 1px solid #2a2a2a;
  border-radius: 4px;
  background: #4a4a4a;
}

.board-rule {
  height: 1px;
  margin: 14px 8px 7px 28px;
  background: #242424;
}

.stat-row {
  display: flex;
  align-items: center;
  height: 25.5px;
}

.stat-row label {
  width: 139px;
  text-align: right;
  color: #cfcfcf;
  white-space: nowrap;
}

.stat-row span {
  margin-left: 16px;
  color: #d8d8d8;
}

.other-card {
  height: 40px;
  padding: 10px 0 0 28px;
  color: #dcdcdc;
}

.prop-bar {
  flex: none;
  display: flex;
  flex-direction: column;
  align-items: center;
  width: 16px;
  box-sizing: border-box;
}

.thumb {
  width: 7px;
  height: 280px;
  margin-top: 8px;
  border-radius: 4px;
  background: #7b7b7b;
}

.prop-bar .tri-dn {
  margin-top: 160px;
}
</style>

<style>
html,
body {
  margin: 0;
  background: #333333;
}
</style>
